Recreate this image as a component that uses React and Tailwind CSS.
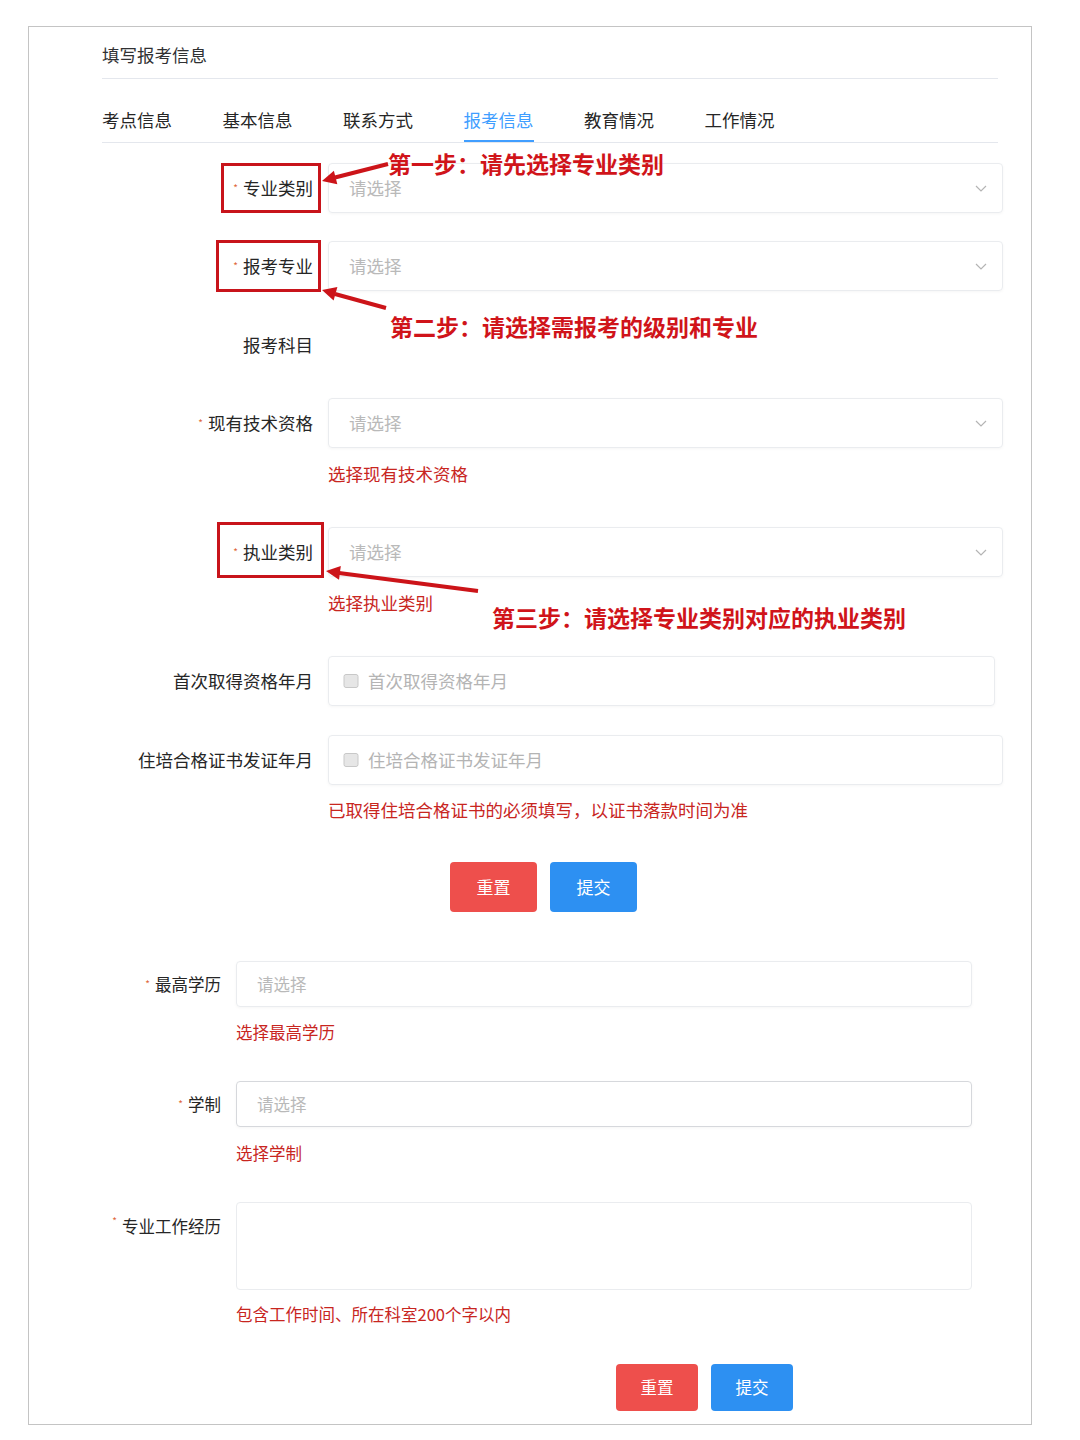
const Star = () => (
  <span className="text-[10px] text-[#e0653a] mr-[5px] relative -top-[1px]">*</span>
);

const Chevron = () => (
  <svg width="14" height="14" viewBox="0 0 14 14" fill="none" className="shrink-0">
    <path d="M2 5l5 5 5-5" stroke="#b4b4b4" strokeWidth="1.2" />
  </svg>
);

const DateIcon = () => (
  <svg width="16" height="16" viewBox="0 0 16 16" className="shrink-0 mr-[9px]">
    <rect x="1" y="1.5" width="14" height="13" rx="2" fill="#e6e6e6" stroke="#c8c8c8" />
  </svg>
);

const Label = ({ text, req, w = "w-[226px]", size = "text-[17.5px]", top }) => (
  <div
    className={`${w} shrink-0 pr-[15px] flex justify-end ${top ? "items-start pt-[12px]" : "items-center"} ${size} text-[#262626]`}
  >
    {req && <Star />}
    <span>{text}</span>
  </div>
);

const Select = ({ w = "w-[675px]", h = "h-[50px]", size = "text-[17.5px]", arrow = true, border = "border-[#eaecef]" }) => (
  <div
    className={`${w} ${h} border ${border} rounded-[4px] pl-[20px] pr-[14px] flex items-center justify-between shadow-[0_1px_3px_rgba(0,0,0,0.04)]`}
  >
    <span className={`${size} text-[#b9b9b9]`}>请选择</span>
    {arrow && <Chevron />}
  </div>
);

const DateInput = ({ text, w }) => (
  <div
    className={`${w} h-[50px] border border-[#eaecef] rounded-[4px] pl-[14px] flex items-center shadow-[0_1px_3px_rgba(0,0,0,0.04)]`}
  >
    <DateIcon />
    <span className="text-[17.5px] text-[#b4b4b4]">{text}</span>
  </div>
);

const Err = ({ text, pl = "pl-[226px]", size = "text-[17.5px]", mt }) => (
  <div className={`${pl} ${mt} h-[20px] leading-[20px] ${size} text-[#c8261f]`}>{text}</div>
);

const tabs = ["考点信息", "基本信息", "联系方式", "报考信息", "教育情况", "工作情况"];

export default function App() {
  return (
    <div className="relative w-[1080px] h-[1440px] bg-white pt-[26px] pl-[28px] font-['Noto_Sans_CJK_SC',sans-serif]">
      <div className="w-[1004px] h-[1399px] border border-[#c4c4c4] pl-[73px]">
        <div className="pt-[16px] h-[40px] leading-[24px] text-[17.5px] text-[#303133]">填写报考信息</div>
        <div className="mt-[11px] w-[896px] h-px bg-[#e4e7ed]" />

        <div className="w-[896px] h-[64px] border-b border-[#e4e7ed] flex">
          {tabs.map((t) => (
            <div key={t} className="w-[120.5px] h-full">
              <span
                className={`inline-block h-full pt-[29px] leading-[24px] text-[17.5px] ${
                  t === "报考信息" ? "text-[#409eff] border-b-2 border-[#409eff]" : "text-[#262626]"
                }`}
              >
                {t}
              </span>
            </div>
          ))}
        </div>

        {/* 报考信息 */}
        <div className="flex mt-[20px]">
          <Label text="专业类别" req />
          <Select />
        </div>
        <div className="flex mt-[28px]">
          <Label text="报考专业" req />
          <Select />
        </div>
        <div className="flex mt-[29px] h-[50px]">
          <Label text="报考科目" />
        </div>
        <div className="flex mt-[28px]">
          <Label text="现有技术资格" req />
          <Select />
        </div>
        <Err text="选择现有技术资格" mt="mt-[16px]" />
        <div className="flex mt-[43px]">
          <Label text="执业类别" req />
          <Select />
        </div>
        <Err text="选择执业类别" mt="mt-[16px]" />
        <div className="flex mt-[43px]">
          <Label text="首次取得资格年月" />
          <DateInput text="首次取得资格年月" w="w-[667px]" />
        </div>
        <div className="flex mt-[29px]">
          <Label text="住培合格证书发证年月" />
          <DateInput text="住培合格证书发证年月" w="w-[675px]" />
        </div>
        <Err text="已取得住培合格证书的必须填写，以证书落款时间为准" mt="mt-[15px]" />
        <div className="flex gap-[13px] mt-[42px] ml-[348px]">
          <button className="w-[87px] h-[50px] rounded-[4px] bg-[#ee4f4c] text-white text-[17px]">重置</button>
          <button className="w-[87px] h-[50px] rounded-[4px] bg-[#2d90f2] text-white text-[17px]">提交</button>
        </div>

        {/* 教育情况 */}
        <div className="flex mt-[49px]">
          <Label text="最高学历" req w="w-[134px]" size="text-[16.5px]" />
          <Select w="w-[736px]" h="h-[46px]" size="text-[16.5px]" arrow={false} />
        </div>
        <Err text="选择最高学历" pl="pl-[134px]" size="text-[16.5px]" mt="mt-[15px]" />
        <div className="flex mt-[39px]">
          <Label text="学制" req w="w-[134px]" size="text-[16.5px]" />
          <Select w="w-[736px]" h="h-[46px]" size="text-[16.5px]" arrow={false} border="border-[#d6d8dc]" />
        </div>
        <Err text="选择学制" pl="pl-[134px]" size="text-[16.5px]" mt="mt-[16px]" />
        <div className="flex mt-[39px]">
          <Label text="专业工作经历" req w="w-[134px]" size="text-[16.5px]" top />
          <div className="w-[736px] h-[88px] border border-[#eaecef] rounded-[4px]" />
        </div>
        <Err text="包含工作时间、所在科室200个字以内" pl="pl-[134px]" size="text-[16.5px]" mt="mt-[14px]" />
        <div className="flex gap-[13px] mt-[40px] ml-[514px]">
          <button className="w-[82px] h-[47px] rounded-[4px] bg-[#ee4f4c] text-white text-[16.5px]">重置</button>
          <button className="w-[82px] h-[47px] rounded-[4px] bg-[#2d90f2] text-white text-[16.5px]">提交</button>
        </div>
      </div>

      {/* annotations */}
      <div className="absolute left-[221px] top-[163px] w-[100px] h-[50px] border-[3px] border-[#c8141b]" />
      <div className="absolute left-[216px] top-[240px] w-[105px] h-[52px] border-[3px] border-[#c8141b]" />
      <div className="absolute left-[217px] top-[522px] w-[107px] h-[56px] border-[3px] border-[#c8141b]" />

      <svg className="absolute left-0 top-0 pointer-events-none" width="1080" height="1440">
        <g stroke="#cc1419" strokeWidth="4" fill="#cc1419">
          <line x1="388" y1="164" x2="335" y2="177.5" />
          <polygon points="322,181 337.3,184.3 333.9,170.7" stroke="none" />
          <line x1="386" y1="308" x2="335" y2="294" />
          <polygon points="322,290 333.6,300.5 337.4,287.1" stroke="none" />
          <line x1="478" y1="591" x2="339" y2="573" />
          <polygon points="326,571 339,579.7 340.8,565.9" stroke="none" />
        </g>
      </svg>

      <div className="absolute left-[388px] top-[148px] leading-[30px] text-[23px] font-bold text-[#d0141a]">
        第一步：请先选择专业类别
      </div>
      <div className="absolute left-[390px] top-[311px] leading-[30px] text-[23px] font-bold text-[#d0141a]">
        第二步：请选择需报考的级别和专业
      </div>
      <div className="absolute left-[492px] top-[602px] leading-[30px] text-[23px] font-bold text-[#d0141a]">
        第三步：请选择专业类别对应的执业类别
      </div>
    </div>
  );
}
